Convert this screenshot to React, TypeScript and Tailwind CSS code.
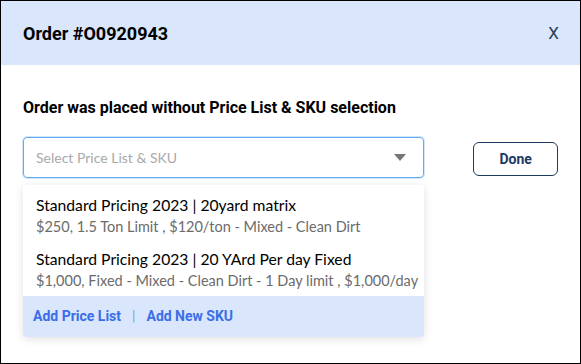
import React from "react";

export default function App() {
  return (
    <div className="w-[581px] h-[364px] bg-white border border-black flex flex-col overflow-hidden" style={{ fontFamily: "Roboto, sans-serif" }}>
      <div className="h-[64px] shrink-0 bg-[#d9e6fc] flex items-center justify-between pl-[22px] pr-[21px]">
        <div className="text-[18px] font-bold text-black">Order #O0920943</div>
        <div className="text-[17px] text-[#2c3e5c] leading-none">X</div>
      </div>
      <div className="flex flex-col pl-[22px] pr-[22px]">
        <div className="mt-[33px] text-[16px] font-bold text-black leading-[20px]">Order was placed without Price List &amp; SKU selection</div>
        <div className="mt-[19px] flex items-start">
          <div className="flex flex-col w-[402px]">
            <div className="h-[41px] border border-[#62aaf2] rounded-[4px] shadow-[0_0_0_1px_#cfe6fd] flex items-center justify-between pl-[12px] pr-[17px]" style={{ fontFamily: "Lato, sans-serif" }}>
              <span className="text-[14px] text-[#a9a9a9]">Select Price List &amp; SKU</span>
              <svg width="12" height="7" viewBox="0 0 12 7"><path d="M0 0 H12 L6 7 Z" fill="#777" /></svg>
            </div>
            <div className="mt-[7px] bg-white shadow-[0_2px_10px_rgba(0,0,0,0.12)] rounded-b-[3px] overflow-hidden" style={{ fontFamily: "Lato, sans-serif" }}>
              <div className="pl-[13px] pt-[10px] h-[54px] whitespace-nowrap">
                <div className="text-[15.7px] text-black leading-[20px]">Standard Pricing 2023 | 20yard matrix</div>
                <div className="text-[14.5px] text-[#6b6b6b] leading-[20px] mt-[2px]">$250, 1.5 Ton Limit , $120/ton - Mixed - Clean Dirt</div>
              </div>
              <div className="pl-[13px] pt-[10px] h-[57px] whitespace-nowrap">
                <div className="text-[15.7px] text-black leading-[20px]">Standard Pricing 2023 | 20 YArd Per day Fixed</div>
                <div className="text-[14.5px] text-[#6b6b6b] leading-[20px] mt-[2px]">$1,000, Fixed - Mixed - Clean Dirt - 1 Day limit , $1,000/day</div>
              </div>
              <div className="h-[41px] bg-[#d9e6fc] flex items-center pl-[10px] text-[14px] font-bold text-[#3a6ee8]" style={{ fontFamily: "Roboto, sans-serif" }}>
                <span>Add Price List</span>
                <span className="mx-[11px] font-normal text-[#7d9ff0]">|</span>
                <span>Add New SKU</span>
              </div>
            </div>
          </div>
          <button className="ml-[49px] mt-[5px] w-[85px] h-[34px] border border-[#1e3a5f] rounded-[6px] text-[14px] font-bold text-[#1e3a5f] bg-white">Done</button>
        </div>
      </div>
    </div>
  );
}
